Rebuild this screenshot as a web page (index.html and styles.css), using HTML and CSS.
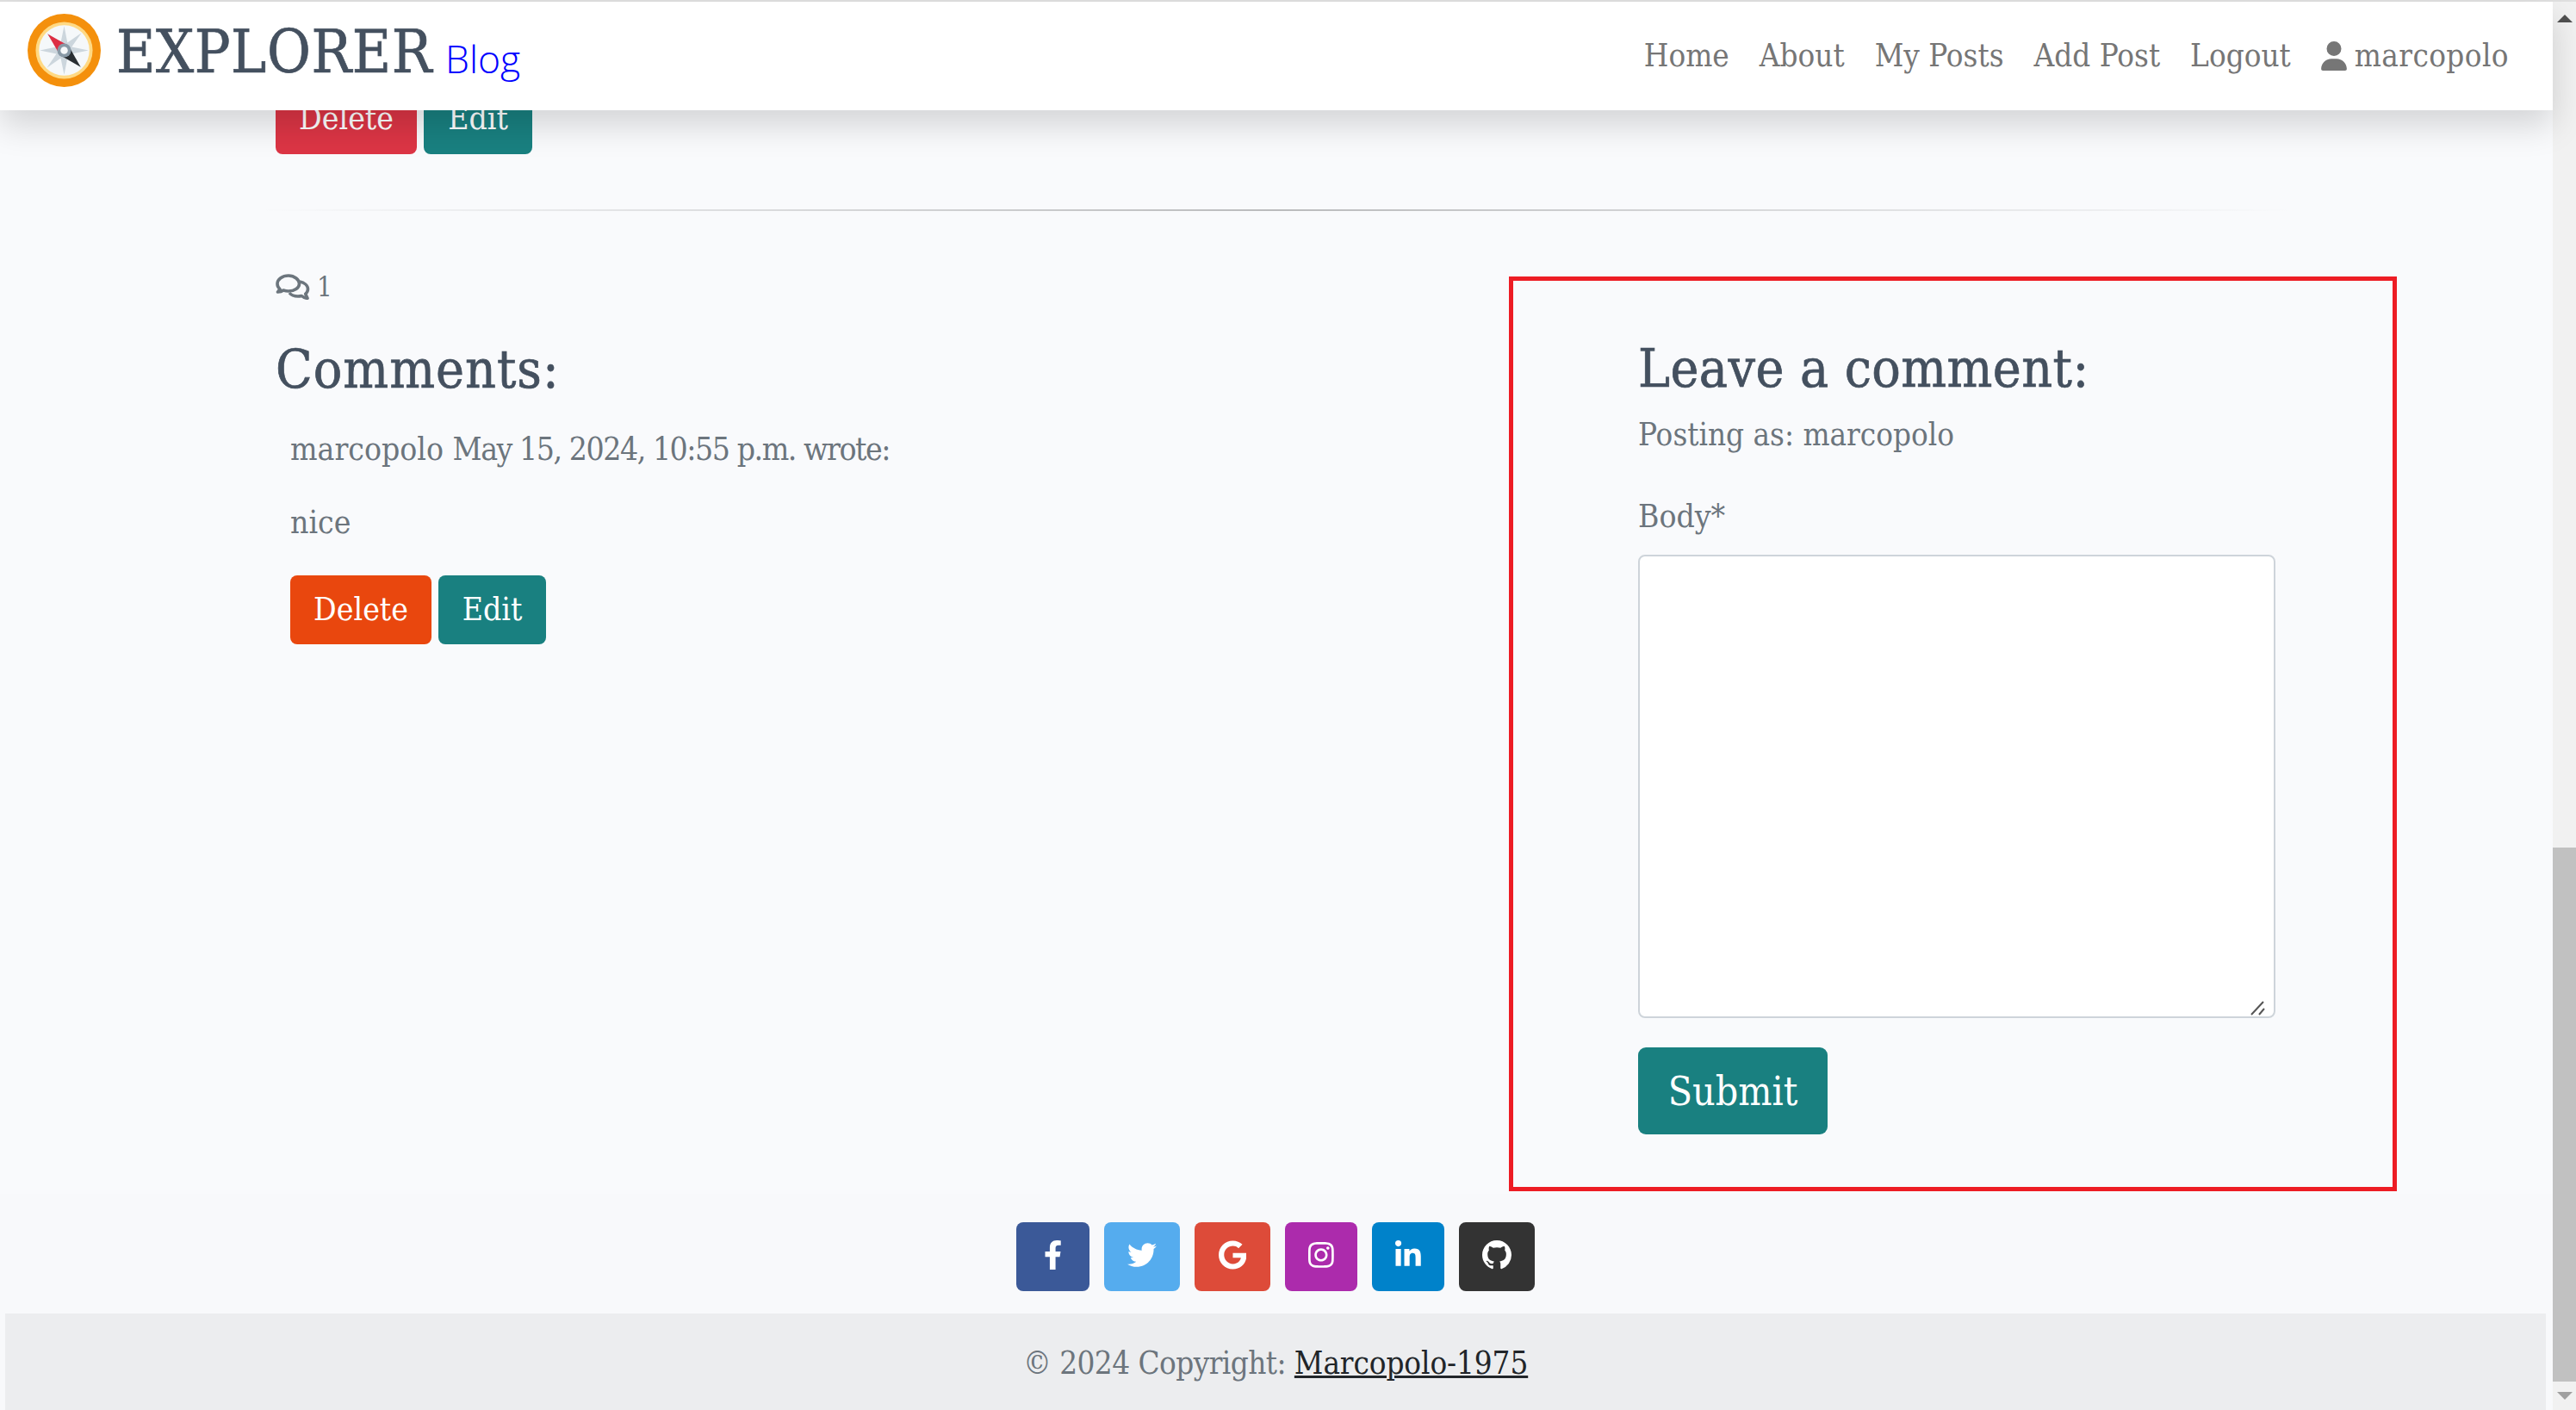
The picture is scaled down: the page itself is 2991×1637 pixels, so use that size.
FILE: index.html
```html
<!DOCTYPE html>
<html>
<head>
  <title>Explorer Blog</title>
  <link rel="stylesheet" href="styles.css">
</head>
<body>
  <div class="top-strip"></div>
  <div class="window">
    <div class="page">
      <nav class="navbar">
        <a class="brand" href="#">
          <svg class="brand-logo" viewBox="0 0 36 36">
            <circle cx="18" cy="18" r="18" fill="#f4900c"/>
            <circle cx="18" cy="18" r="14" fill="#ffd983"/>
            <circle cx="18" cy="18" r="12.4" fill="#f5f8fa"/>
            <path d="M18 6l1.6 8.2 6.9-4.8-4.8 6.9L30 18l-8.3 1.7 4.8 6.9-6.9-4.8L18 30l-1.7-8.2-6.8 4.8 4.7-6.9L6 18l8.2-1.7-4.7-6.9 6.8 4.8z" fill="#ccd6dd"/>
            <path d="M9.9 9.9l10 5.7-4.2 4.3z" fill="#dd2e44"/>
            <path d="M26.1 26.1l-10-5.7 4.3-4.3z" fill="#292f33"/>
            <circle cx="18" cy="18" r="3.4" fill="#8899a6"/>
            <circle cx="18" cy="18" r="1.8" fill="#f5f8fa"/>
          </svg>
          <span class="brand-name">EXPLORER</span>
          <span class="brand-sub">Blog</span>
        </a>
        <div class="nav-links">
          <a href="#">Home</a>
          <a href="#">About</a>
          <a href="#">My Posts</a>
          <a href="#">Add Post</a>
          <a href="#">Logout</a>
          <a class="nav-user" href="#">
            <svg class="user-icon" viewBox="0 0 448 512"><path d="M224 256A128 128 0 1 0 224 0a128 128 0 1 0 0 256zm-45.7 48C79.8 304 0 383.8 0 482.3C0 498.7 13.3 512 29.7 512H418.3c16.4 0 29.7-13.3 29.7-29.7C448 383.8 368.2 304 269.7 304H178.3z"/></svg>
            marcopolo
          </a>
        </div>
      </nav>

      <main class="content">
        <div class="post-actions">
          <a class="btn btn-red" href="#">Delete</a>
          <a class="btn btn-teal" href="#">Edit</a>
        </div>
        <hr class="divider">
        <div class="columns">
          <section class="comments">
            <div class="comment-count">
              <svg class="comment-icon" viewBox="0 0 40 30" fill="none" stroke="currentColor" stroke-width="3.600" stroke-linejoin="round">
                <path d="M15 2C8 2 2 6 2 11.500c0 2.500 1.200 4.500 3 6.200L2.500 21c3 0 5-.8 6.500-2 1.800.6 3.800 1 6 1 7 0 12.500-3.800 12.500-8.500S22 2 15 2z"/>
                <path d="M28 9c5 1 9.500 4.200 9.500 8.500 0 2.300-1 4.200-2.800 5.800l2.300 5c-3 0-5.300-1.500-6.800-2.800-1.300.3-2.800.5-4.200.5-4.500 0-8-1.500-10-4"/>
              </svg>
              <span>1</span>
            </div>
            <h3 class="heading">Comments:</h3>
            <div class="comment">
              <p class="comment-meta">marcopolo <span class="comment-date">May 15, 2024, 10:55 p.m. wrote:</span></p>
              <p class="comment-body">nice</p>
              <div class="comment-actions">
                <a class="btn btn-orange" href="#">Delete</a>
                <a class="btn btn-teal" href="#">Edit</a>
              </div>
            </div>
          </section>

          <section class="comment-form">
            <h3 class="heading">Leave a comment:</h3>
            <p class="posting-as">Posting as: marcopolo</p>
            <label class="field-label" for="id_body">Body*</label>
            <div class="textarea-wrap">
              <textarea id="id_body" class="field-input"></textarea>
              <svg class="resize-grip" viewBox="0 0 18 18" stroke="#555" stroke-width="2"><path d="M2 17L16 2M11 17l6-7"/></svg>
            </div>
            <button class="btn btn-teal btn-large" type="button">Submit</button>
          </section>
        </div>
      </main>

      <footer class="footer">
        <div class="socials">
          <a class="social facebook" href="#"><svg viewBox="0 0 320 512"><path d="M279.14 288l14.22-92.66h-88.91v-60.13c0-25.35 12.42-50.06 52.24-50.06h40.42V6.26S260.43 0 225.36 0c-73.22 0-121.08 44.38-121.08 124.72v70.62H22.89V288h81.39v224h100.17V288z"/></svg></a>
          <a class="social twitter" href="#"><svg viewBox="0 0 512 512"><path d="M459.37 151.716c.325 4.548.325 9.097.325 13.645 0 138.72-105.583 298.558-298.558 298.558-59.452 0-114.68-17.219-161.137-47.106 8.447.974 16.568 1.299 25.34 1.299 49.055 0 94.213-16.568 130.274-44.832-46.132-.975-84.792-31.188-98.112-72.772 6.498.974 12.995 1.624 19.818 1.624 9.421 0 18.843-1.3 27.614-3.573-48.081-9.747-84.143-51.98-84.143-102.985v-1.299c13.969 7.797 30.214 12.67 47.431 13.319-28.264-18.843-46.781-51.005-46.781-87.391 0-19.492 5.197-37.36 14.294-52.954 51.655 63.675 129.3 105.258 216.365 109.807-1.624-7.797-2.599-15.918-2.599-24.04 0-57.828 46.782-104.934 104.934-104.934 30.213 0 57.502 12.67 76.67 33.137 23.715-4.548 46.456-13.32 66.599-25.34-7.798 24.366-24.366 44.833-46.132 57.827 21.117-2.273 41.584-8.122 60.426-16.243-14.292 20.791-32.161 39.308-52.628 54.253z"/></svg></a>
          <a class="social google" href="#"><svg viewBox="0 0 488 512"><path d="M488 261.8C488 403.3 391.1 504 248 504 110.8 504 0 393.2 0 256S110.8 8 248 8c66.8 0 123 24.5 166.3 64.9l-67.5 64.9C258.5 52.6 94.3 116.6 94.3 256c0 86.5 69.1 156.6 153.7 156.6 98.2 0 135-70.4 140.8-106.9H248v-85.3h236.1c2.3 12.7 3.9 24.9 3.9 41.4z"/></svg></a>
          <a class="social instagram" href="#"><svg viewBox="0 0 448 512"><path d="M224.1 141c-63.6 0-114.9 51.3-114.9 114.9s51.3 114.9 114.9 114.9S339 319.5 339 255.9 287.7 141 224.1 141zm0 189.6c-41.1 0-74.7-33.5-74.7-74.7s33.5-74.7 74.7-74.7 74.7 33.5 74.7 74.7-33.6 74.7-74.7 74.7zm146.4-194.3c0 14.9-12 26.8-26.8 26.8-14.9 0-26.8-12-26.8-26.8s12-26.8 26.8-26.8 26.8 12 26.8 26.8zm76.1 27.2c-1.7-35.9-9.9-67.7-36.2-93.9-26.2-26.2-58-34.4-93.9-36.2-37-2.1-147.9-2.1-184.9 0-35.8 1.7-67.6 9.9-93.9 36.1s-34.4 58-36.2 93.9c-2.1 37-2.1 147.9 0 184.9 1.7 35.9 9.9 67.7 36.2 93.9s58 34.4 93.9 36.2c37 2.1 147.9 2.1 184.9 0 35.9-1.7 67.7-9.9 93.9-36.2 26.2-26.2 34.4-58 36.2-93.9 2.1-37 2.1-147.8 0-184.8zM398.8 388c-7.8 19.6-22.9 34.7-42.6 42.6-29.5 11.7-99.5 9-132.1 9s-102.7 2.6-132.1-9c-19.6-7.8-34.7-22.9-42.6-42.6-11.7-29.5-9-99.5-9-132.1s-2.6-102.7 9-132.1c7.8-19.6 22.9-34.7 42.6-42.6 29.5-11.7 99.5-9 132.1-9s102.7-2.6 132.1 9c19.6 7.8 34.7 22.9 42.6 42.6 11.7 29.5 9 99.5 9 132.1s2.7 102.7-9 132.1z"/></svg></a>
          <a class="social linkedin" href="#"><svg viewBox="0 0 448 512"><path d="M100.28 448H7.4V148.9h92.88zM53.79 108.1C24.09 108.1 0 83.5 0 53.8a53.79 53.79 0 0 1 107.58 0c0 29.7-24.1 54.3-53.79 54.3zM447.9 448h-92.68V302.4c0-34.7-.7-79.2-48.29-79.2-48.29 0-55.69 37.7-55.69 76.7V448h-92.78V148.9h89.08v40.8h1.3c12.4-23.5 42.69-48.3 87.88-48.3 94 0 111.28 61.9 111.28 142.3V448z"/></svg></a>
          <a class="social github" href="#"><svg viewBox="0 0 16 16"><path d="M8 0C3.58 0 0 3.58 0 8c0 3.54 2.29 6.53 5.47 7.59.4.07.55-.17.55-.38 0-.19-.01-.82-.01-1.49-2.01.37-2.53-.49-2.69-.94-.09-.23-.48-.94-.82-1.13-.28-.15-.68-.52-.01-.53.63-.01 1.08.58 1.23.82.72 1.21 1.87.87 2.33.66.07-.52.28-.87.51-1.07-1.78-.2-3.64-.89-3.64-3.95 0-.87.31-1.59.82-2.15-.08-.2-.36-1.02.08-2.12 0 0 .67-.21 2.2.82.64-.18 1.32-.27 2-.27.68 0 1.36.09 2 .27 1.53-1.04 2.2-.82 2.2-.82.44 1.1.16 1.92.08 2.12.51.56.82 1.27.82 2.15 0 3.07-1.87 3.75-3.65 3.95.29.25.54.73.54 1.48 0 1.07-.01 1.93-.01 2.2 0 .21.15.46.55.38A8.013 8.013 0 0016 8c0-4.42-3.58-8-8-8z"/></svg></a>
        </div>
        <div class="copyright">© 2024 Copyright: <a href="#">Marcopolo-1975</a></div>
      </footer>
    </div>

    <div class="scrollbar">
      <div class="arrow-up"></div>
      <div class="thumb"></div>
      <div class="arrow-down"></div>
    </div>
  </div>
</body>
</html>
```

FILE: styles.css
```css
html, body {
  margin: 0;
  padding: 0;
  height: 100%;
  overflow: hidden;
}

body {
  display: flex;
  flex-direction: column;
  background-color: #f9fafc;
  color: #6c757d;
  font-family: "DejaVu Serif Condensed", "DejaVu Serif", serif;
  font-size: 37px;
  line-height: 52px;
}

a {
  text-decoration: none;
}

.top-strip {
  height: 2px;
  background-color: #e0e0e0;
}

.window {
  flex: 1;
  display: flex;
  min-height: 0;
}

.page {
  flex: 1;
  position: relative;
  display: flex;
  flex-direction: column;
  min-width: 0;
}

.navbar {
  position: absolute;
  top: 0;
  left: 0;
  right: 0;
  z-index: 10;
  box-sizing: border-box;
  height: 126px;
  display: flex;
  align-items: center;
  justify-content: space-between;
  padding: 0 51px 0 32px;
  background-color: #fff;
  box-shadow: 0 18px 36px rgba(0, 0, 0, 0.15);
}

.brand {
  display: flex;
  align-items: center;
  margin-top: -10px;
}

.brand-logo {
  width: 85px;
  height: 85px;
  margin: -4px 18px 0 0;
}

.brand-name {
  color: #44505f;
  font-size: 69px;
  line-height: 1;
  letter-spacing: 0.6px;
  -webkit-text-stroke: 0.7px #44505f;
}

.brand-sub {
  color: #0000ff;
  font-family: "Open Sans", sans-serif;
  font-size: 44.5px;
  font-weight: 300;
  line-height: 1;
  margin: 16px 0 0 15px;
}

.nav-links {
  display: flex;
  gap: 35px;
  font-size: 36.5px;
}

.nav-links a {
  color: #767676;
}

.nav-user {
  display: flex;
  align-items: center;
  letter-spacing: 0.4px;
}

.user-icon {
  width: 30px;
  height: 34px;
  margin-right: 9px;
  fill: #767676;
}

.content {
  flex: 1;
  min-height: 0;
}

.post-actions {
  display: flex;
  gap: 8px;
  padding: 97px 0 0 320px;
}

.btn {
  box-sizing: border-box;
  display: inline-flex;
  align-items: center;
  justify-content: center;
  height: 80px;
  border: 0;
  border-radius: 8px;
  color: #fff;
  font-family: inherit;
  font-size: 37px;
}

.post-actions .btn {
  padding-bottom: 3px;
}

.post-actions .btn-red {
  width: 164px;
}

.post-actions .btn-teal {
  width: 126px;
}

.btn-red {
  background-color: #dc3545;
}

.btn-orange {
  background-color: #e9470e;
  width: 164px;
}

.btn-teal {
  background-color: #198080;
  width: 125px;
}

.btn-large {
  width: 220px;
  height: 101px;
  font-size: 46px;
  border-radius: 9px;
  margin-top: 34px;
}

.divider {
  height: 2px;
  margin: 64px 300px 0;
  border: 0;
  background: linear-gradient(to right, rgba(0, 0, 0, 0), rgba(0, 0, 0, 0.25), rgba(0, 0, 0, 0));
}

.columns {
  display: flex;
  padding: 76px 181px 0 320px;
}

.comments {
  flex: 1;
}

.comment-count {
  display: flex;
  align-items: center;
  height: 30px;
  margin-top: -3px;
  font-size: 31px;
}

.comment-icon {
  width: 40px;
  height: 30px;
  margin-right: 8px;
}

.heading {
  margin: 0;
  color: #44505f;
  font-size: 62px;
  font-weight: 400;
  line-height: 72px;
  letter-spacing: 0.4px;
  -webkit-text-stroke: 0.7px #44505f;
}

.comments .heading {
  margin-top: 45px;
  letter-spacing: 1px;
}

.comment {
  padding-left: 17px;
}

.comment-meta {
  margin: 31px 0 0;
}

/* digits run narrow in this line */
.comment-date {
  letter-spacing: -1.45px;
}

.comment-body {
  margin: 33px 0 0;
}

.comment-actions {
  display: flex;
  gap: 8px;
  margin-top: 35px;
}

/* Red box marked round the form in the screenshot */
.comment-form {
  box-sizing: border-box;
  width: 1031px;
  height: 1062px;
  padding: 66px 145px 0;
  border: 5px solid #ed1c24;
}

.posting-as {
  margin: 15px 0 0;
  font-size: 36.5px;
}

.field-label {
  display: block;
  margin-top: 43px;
}

.textarea-wrap {
  position: relative;
  margin-top: 18px;
  height: 538px;
}

.field-input {
  box-sizing: border-box;
  display: block;
  width: 740px;
  height: 538px;
  border: 2px solid #ced4da;
  border-radius: 8px;
  background-color: #fff;
  resize: none;
}

.resize-grip {
  position: absolute;
  right: 3px;
  bottom: 3px;
  width: 18px;
  height: 18px;
}

.footer {
  margin-top: 1px;
  background-color: #f8f9fb;
}

.socials {
  display: flex;
  justify-content: flex-start;
  gap: 17px;
  padding: 33px 0 26px 1180px;
}

.social {
  box-sizing: border-box;
  display: flex;
  align-items: center;
  justify-content: center;
  height: 80px;
  padding-bottom: 4px;
  border-radius: 8px;
}

.social svg {
  height: 34px;
  fill: #fff;
}

.facebook { width: 85px; background-color: #3b5998; }
.twitter { width: 88px; background-color: #55acee; }
.google { width: 88px; background-color: #dd4b39; }
.instagram { width: 84px; background-color: #ac2bac; }
.linkedin { width: 84px; background-color: #0082ca; }
.github { width: 88px; background-color: #333; }

.copyright {
  margin: 0 8px 0 6px;
  height: 112px;
  padding-top: 32px;
  box-sizing: border-box;
  padding-left: 1182px;
  background-color: #ecedef;
  font-size: 36.5px;
  letter-spacing: -0.55px;
}

.copyright a {
  color: #212529;
  letter-spacing: -0.1px;
  text-decoration: underline;
  text-decoration-thickness: 3px;
}

/* Browser scrollbar from the screenshot */
.scrollbar {
  width: 27px;
  display: flex;
  flex-direction: column;
  align-items: center;
  background-color: #f1f1f1;
}

.thumb {
  align-self: stretch;
  height: 620px;
  margin-top: 958px;
  background-color: #c1c1c1;
}

.arrow-up {
  width: 0;
  height: 0;
  margin-top: 15px;
  border-left: 9px solid transparent;
  border-right: 9px solid transparent;
  border-bottom: 9px solid #505050;
}

.arrow-down {
  width: 0;
  height: 0;
  margin-top: 12px;
  border-left: 9px solid transparent;
  border-right: 9px solid transparent;
  border-top: 9px solid #a0a0a0;
}
```
